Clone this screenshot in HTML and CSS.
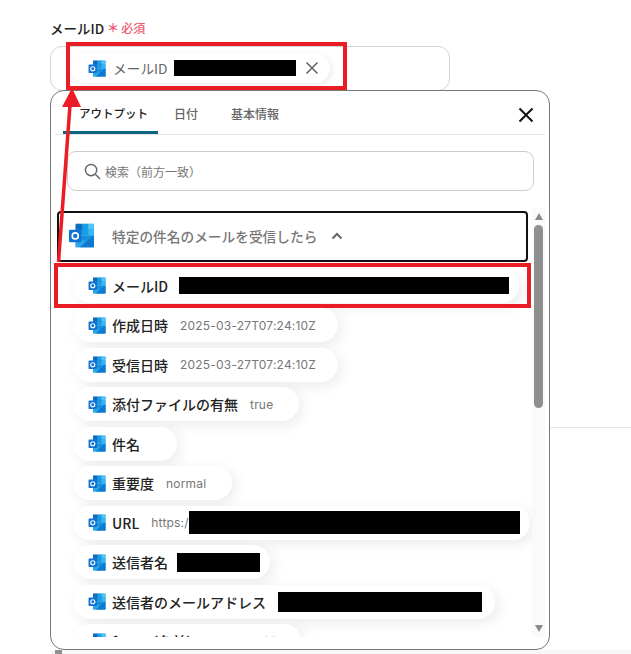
FILE: index.html
```html
<!DOCTYPE html>
<html lang="ja">
<head>
<meta charset="utf-8">
<title>メールID</title>
<link rel="stylesheet" href="styles.css">
</head>
<body>
<svg class="defs" width="0" height="0">
  <symbol id="ol" viewBox="0 0 32 30">
    <rect x="9" y="1" width="22" height="14" fill="#1490df"/>
    <rect x="9" y="1" width="8" height="7" fill="#0f6cbd"/>
    <rect x="17" y="1" width="7" height="7" fill="#1c9be6"/>
    <rect x="24" y="1" width="7" height="7" fill="#50c4f5"/>
    <rect x="17" y="8" width="7" height="7" fill="#1c9be6"/>
    <rect x="24" y="8" width="7" height="7" fill="#35b8f1"/>
    <path d="M9 15 L31 15 L31 29 L9 29 Z" fill="#1490df"/>
    <path d="M9 15 L20 22 L31 15 L31 29 L9 29 Z" fill="#28a8ea"/>
    <path d="M14 29 L24 20 L31 15 L31 29 Z" fill="#0f78cf"/>
    <rect x="1" y="8" width="15" height="15" rx="1.5" fill="#1272d3"/>
    <circle cx="8.5" cy="15.5" r="3.6" fill="none" stroke="#fff" stroke-width="2"/>
  </symbol>
</svg>
<main class="page">
  <div class="label-row">
    <span class="label">メールID</span>
    <span class="star">＊</span>
    <span class="req">必須</span>
  </div>
  <div class="input">
    <div class="chip">
      <svg class="ic"><use href="#ol"/></svg>
      <span class="chip-text">メールID</span>
      <span class="mask chip-mask"></span>
      <svg class="chip-x" viewBox="0 0 14 14"><path d="M1.5 1.5 L12.5 12.5 M12.5 1.5 L1.5 12.5"/></svg>
    </div>
  </div>
  <div class="rule"></div>
  <section class="popup">
    <header class="tabs">
      <span class="tab active">アウトプット</span>
      <span class="tab">日付</span>
      <span class="tab">基本情報</span>
      <svg class="close" viewBox="0 0 16 16"><path d="M1.5 1.5 L14.5 14.5 M14.5 1.5 L1.5 14.5"/></svg>
    </header>
    <div class="search">
      <svg class="mag" viewBox="0 0 18 18"><circle cx="7.5" cy="7.5" r="6"/><path d="M12 12 L17 17"/></svg>
      <span>検索（前方一致）</span>
    </div>
    <div class="body">
      <div class="list">
        <div class="group">
          <svg class="ic-big"><use href="#ol"/></svg>
          <span class="group-title">特定の件名のメールを受信したら</span>
          <svg class="chev" viewBox="0 0 12 8"><path d="M1.5 6.5 L6 2 L10.5 6.5"/></svg>
        </div>
        <div class="row"><svg class="ic"><use href="#ol"/></svg><b>メールID</b><span class="mask m1"></span></div>
        <div class="row"><svg class="ic"><use href="#ol"/></svg><b>作成日時</b><span class="val stamp">2025-03-27T07:24:10Z</span></div>
        <div class="row"><svg class="ic"><use href="#ol"/></svg><b>受信日時</b><span class="val stamp">2025-03-27T07:24:10Z</span></div>
        <div class="row"><svg class="ic"><use href="#ol"/></svg><b>添付ファイルの有無</b><span class="val">true</span></div>
        <div class="row bare"><svg class="ic"><use href="#ol"/></svg><b>件名</b></div>
        <div class="row"><svg class="ic"><use href="#ol"/></svg><b>重要度</b><span class="val">normal</span></div>
        <div class="row"><svg class="ic"><use href="#ol"/></svg><b>URL</b><span class="val url">https:/</span><span class="mask m2"></span></div>
        <div class="row"><svg class="ic"><use href="#ol"/></svg><b>送信者名</b><span class="mask m3"></span></div>
        <div class="row"><svg class="ic"><use href="#ol"/></svg><b>送信者のメールアドレス</b><span class="mask m4"></span></div>
        <div class="row"><svg class="ic"><use href="#ol"/></svg><b>from（名前）</b><span class="val">Sora Yukiti</span></div>
      </div>
      <div class="scrollbar">
        <i class="up"></i>
        <i class="thumb"></i>
        <i class="down"></i>
      </div>
    </div>
  </section>
  <div class="bottom-strip"><i></i></div>
  <div class="mark mark-a"></div>
  <div class="mark mark-b"></div>
  <svg class="arrow" viewBox="0 0 631 654"><path class="shaft" d="M58.5 262 L70 105"/><path class="head" d="M72 88 L81 107 L62 107 Z"/></svg>
</main>
</body>
</html>
```
FILE: styles.css
```css
* { box-sizing: border-box; }
html, body { margin: 0; padding: 0; background: #fff; }
body { width: 631px; height: 654px; overflow: hidden; font-family: "Noto Sans CJK JP", "Noto Sans", sans-serif; color: #2b2b2b; }
.defs { position: absolute; }
.page { position: relative; width: 631px; height: 654px; padding: 19px 0 0 50px; overflow: hidden; }
.label-row { display: flex; align-items: center; height: 17px; }
.label { font-size: 13.5px; font-weight: 500; color: #222; }
.star { font-size: 12px; font-weight: 700; color: #ee5a70; margin-left: 3px; }
.req { font-size: 12px; font-weight: 500; color: #ee5a70; margin-left: 2px; }
.input { width: 400px; height: 45px; margin-top: 10px; border: 1px solid #d4d4d4; border-radius: 12px; padding: 6px 0 0 20px; }
.chip { display: flex; align-items: center; width: 259px; height: 30px; border-radius: 15px; padding-left: 17px; box-shadow: 2px 2px 6px rgba(0,0,0,.08); background: #fff; }
.ic { width: 18px; height: 17px; flex: none; }
.chip-text { font-size: 13.7px; color: #666; margin-left: 7px; }
.mask { display: block; background: #000; flex: none; }
.chip-mask { width: 122px; height: 16px; margin-left: 6px; }
.chip-x { width: 14px; height: 14px; margin-left: 9px; fill: none; stroke: #666; stroke-width: 1.6; }
.rule { position: absolute; left: 549px; top: 427px; width: 82px; height: 1px; background: #e6e6e6; }
.popup { position: absolute; left: 50px; top: 90px; width: 500px; height: 560px; border: 1px solid #777; border-radius: 14px; background: #fff; display: flex; flex-direction: column; padding: 0 4px 12px; z-index: 1; }
.tabs { display: flex; align-items: flex-start; height: 44px; border-bottom: 1px solid #e4e4e4; position: relative; padding-left: 8px; flex: none; }
.tab { font-size: 12px; height: 43px; padding: 14px 15px 0; color: #666; font-weight: 500; margin-right: 3px; }
.tab.active { color: #222; border-bottom: 3px solid #0d6680; border-radius: 3px 3px 0 0; width: 95px; padding-left: 16px; padding-right: 0; margin-right: 1px; white-space: nowrap; font-size: 11.5px; }
.close { position: absolute; right: 11px; top: 16px; width: 16px; height: 16px; fill: none; stroke: #111; stroke-width: 2; }
.search { display: flex; align-items: center; flex: none; width: 467px; height: 40px; margin: 16px 0 0 12px; border: 1px solid #ccc; border-radius: 9px; padding-left: 16px; gap: 4px; font-size: 12px; color: #777; }
.mag { width: 17px; height: 17px; fill: none; stroke: #666; stroke-width: 1.5; }
.body { display: flex; flex: 1; min-height: 0; margin-top: 17px; }
.list { flex: 1; min-width: 0; overflow: hidden; padding: 3px 0 0 2px; }
.group { display: flex; align-items: center; width: 471px; height: 51px; border: 2px solid #111; border-radius: 4px; padding: 0 0 2px 9px; }
.ic-big { width: 27px; height: 25px; flex: none; }
.group-title { font-size: 13.7px; font-weight: 500; color: #777; margin-left: 17px; }
.chev { width: 12px; height: 8px; margin-left: 14px; fill: none; stroke: #666; stroke-width: 2; }
.group + .row { margin-top: 6.5px; }
.row { display: flex; align-items: center; width: max-content; height: 34px; margin: 5.5px 0 0 16px; padding: 0 10px 0 15px; border-radius: 17px; background: #fff; box-shadow: 4px 4px 14px rgba(0,0,0,.08); }
.row.bare { padding-right: 37px; }
.row b { font-size: 14px; font-weight: 500; color: #222; margin-left: 6px; white-space: nowrap; }
.val { font-size: 12px; letter-spacing: .2px; color: #777; margin: 0 16px 0 12px; white-space: nowrap; font-family: "Inter", "Noto Sans", sans-serif; }
.val.stamp { margin-right: 12px; }
.val.url { margin-right: 0; }
.m1 { width: 330px; height: 17px; margin-left: 11px; }
.m2 { width: 331px; height: 23px; }
.m3 { width: 83px; height: 19px; margin-left: 9px; }
.m4 { width: 204px; height: 20px; margin-left: 12px; margin-right: 3px; }
.scrollbar { position: relative; flex: none; width: 13px; background: #fafafa; display: flex; flex-direction: column; align-items: center; }
.up, .down { width: 0; height: 0; border-left: 4.5px solid transparent; border-right: 4.5px solid transparent; flex: none; }
.up { border-bottom: 7px solid #8a8a8a; margin-top: 5px; }
.thumb { width: 9px; height: 183px; margin-top: 5px; background: #8f8f8f; border-radius: 5px; flex: none; }
.down { border-top: 7px solid #8a8a8a; margin-top: auto; margin-bottom: 5px; }
.bottom-strip { position: absolute; left: 51px; top: 650px; width: 580px; height: 4px; background: #f7f7f7; }
.bottom-strip i { display: block; width: 7px; height: 4px; margin-left: 4px; background: #8f8f8f; }
.mark { position: absolute; border: 4px solid #ea1c24; z-index: 2; }
.mark-a { left: 66px; top: 42px; width: 281px; height: 48px; }
.mark-b { left: 54px; top: 263px; width: 477px; height: 45px; }
.arrow { position: absolute; left: 0; top: 0; width: 631px; height: 654px; z-index: 3; pointer-events: none; }
.shaft { stroke: #ea1c24; stroke-width: 3.5; fill: none; }
.head { fill: #ea1c24; }
```
